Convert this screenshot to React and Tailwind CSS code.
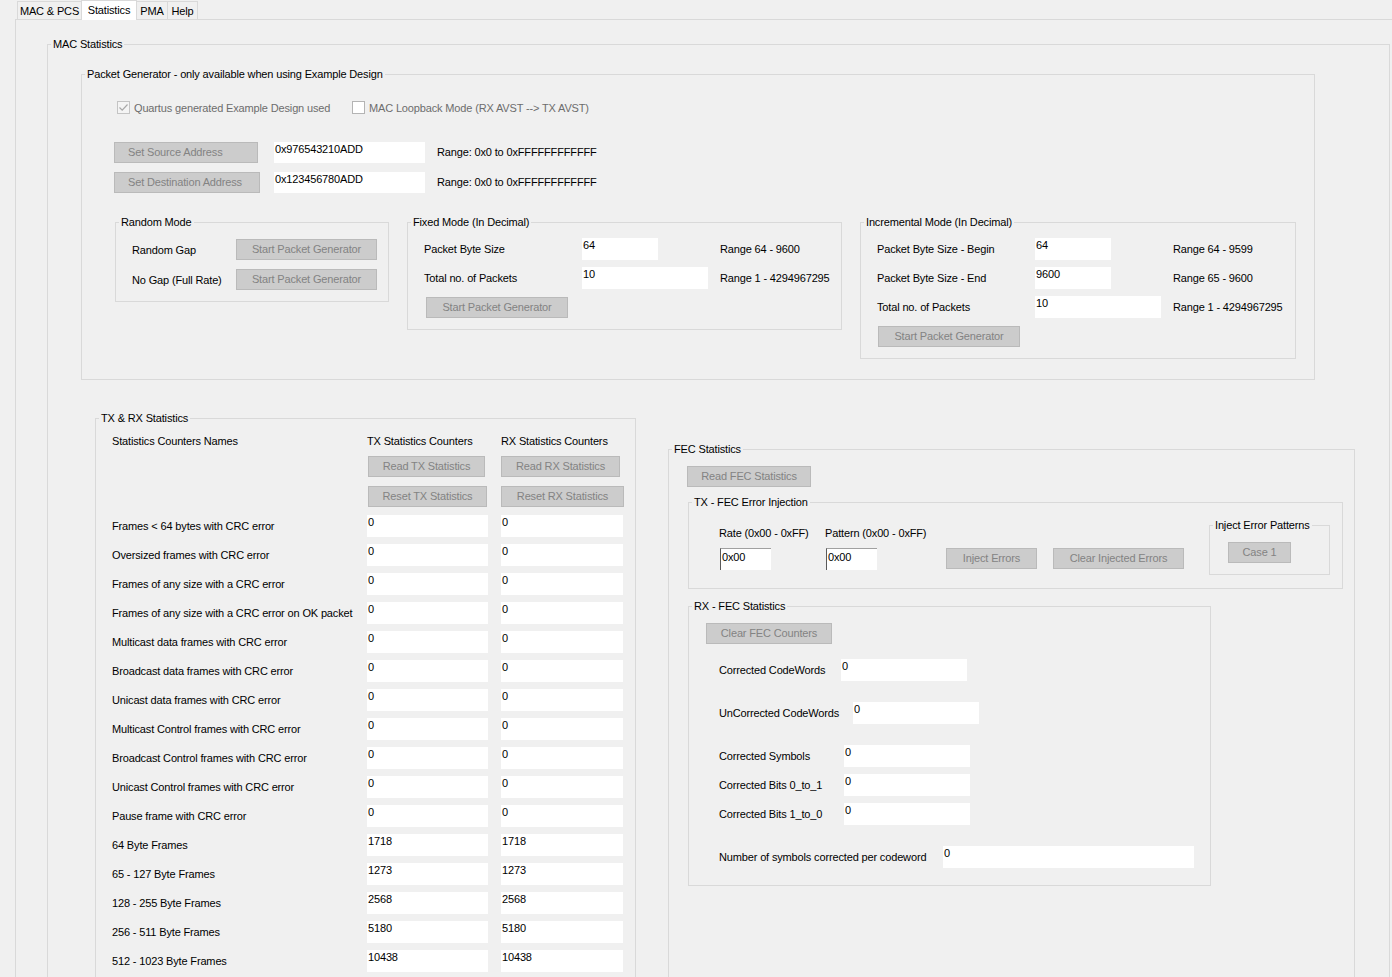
import React from 'react';

const Group = ({ title, className = '', children }) => (
    <fieldset className={`border border-[#d9d9d9] ${className}`}>
        <legend className="ml-[3px] px-[2px] leading-[14px] text-black">{title}</legend>
        {children}
    </fieldset>
);

const Btn = ({ w, align = 'justify-center', className = '', children }) => (
    <button type="button" className={`h-[21px] ${w} flex items-center ${align} pb-[2px] bg-[#cccccc] border border-[#bababa] text-[#838383] leading-[14px] ${className}`}>
        {children}
    </button>
);

const Field = ({ w, h = 'h-[22px]', className = '', children }) => (
    <div className={`${h} ${w} bg-white pl-[1px] leading-[14px] text-black ${className}`}>{children}</div>
);

const CheckBox = ({ checked }) => (
    <div className={`w-[13px] h-[13px] border flex items-center justify-center ${checked ? 'border-[#c4c4c4] bg-[#f4f4f4]' : 'border-[#b4b4b4] bg-white'}`}>
        {checked && (
            <svg width="11" height="11" viewBox="0 0 11 11">
                <polyline points="1.5,5.5 4.2,8.2 9.5,2.5" fill="none" stroke="#a8a8a8" strokeWidth="1.2" />
            </svg>
        )}
    </div>
);

const counters = [
    ['Frames < 64 bytes with CRC error', '0'],
    ['Oversized frames with CRC error', '0'],
    ['Frames of any size with a CRC error', '0'],
    ['Frames of any size with a CRC error on OK packet', '0'],
    ['Multicast data frames with CRC error', '0'],
    ['Broadcast data frames with CRC error', '0'],
    ['Unicast data frames with CRC error', '0'],
    ['Multicast Control frames with CRC error', '0'],
    ['Broadcast Control frames with CRC error', '0'],
    ['Unicast Control frames with CRC error', '0'],
    ['Pause frame with CRC error', '0'],
    ['64 Byte Frames', '1718'],
    ['65 - 127 Byte Frames', '1273'],
    ['128 - 255 Byte Frames', '2568'],
    ['256 - 511 Byte Frames', '5180'],
    ['512 - 1023 Byte Frames', '10438'],
];

export default function App() {
    return (
        <div className="w-[1392px] h-[977px] overflow-hidden bg-[#f0f0f0] text-black text-[11px] leading-[14px] tracking-[-0.15px] font-['Liberation_Sans',Arial,sans-serif]">
            {/* tabs */}
            <div className="flex items-end h-[19px] pl-[17px] relative z-10">
                <div className="w-[65px] h-[18px] border border-b-0 border-[#d9d9d9] flex items-center justify-center">MAC &amp; PCS</div>
                <div className="w-[56px] h-[20px] -ml-px -mb-px border border-b-0 border-[#d9d9d9] bg-white flex items-start pt-[2px] justify-center">Statistics</div>
                <div className="w-[32px] h-[18px] -ml-px border border-b-0 border-[#d9d9d9] flex items-center justify-center">PMA</div>
                <div className="w-[31px] h-[18px] -ml-px border border-b-0 border-[#d9d9d9] flex items-center justify-center">Help</div>
            </div>

            <div className="ml-[15px] border-l border-t border-[#d9d9d9] h-[980px] pl-[31px] pt-[17px]">
                <Group title="MAC Statistics" className="w-[1343px] pb-[100px]">
                    {/* Packet generator */}
                    <Group title="Packet Generator - only available when using Example Design" className="ml-[33px] mt-[16px] w-[1234px] pb-[20px]">
                        <div className="flex items-center h-[13px] mt-[20px] ml-[35px]">
                            <div className="w-[235px] flex items-center gap-[4px]">
                                <CheckBox checked />
                                <span className="text-[#6d6d6d]">Quartus generated Example Design used</span>
                            </div>
                            <div className="flex items-center gap-[4px]">
                                <CheckBox />
                                <span className="text-[#6d6d6d]">MAC Loopback Mode (RX AVST --&gt; TX AVST)</span>
                            </div>
                        </div>

                        <div className="mt-[28px] ml-[32px] grid grid-cols-[160px_163px_auto] gap-y-[9px] items-center">
                            <Btn w="w-[144px]" align="justify-start pl-[13px]">Set Source Address</Btn>
                            <Field w="w-[151px]" h="h-[21px]">0x976543210ADD</Field>
                            <span className="-mt-px">Range: 0x0 to 0xFFFFFFFFFFFF</span>
                            <Btn w="w-[146px]" align="justify-start pl-[13px]">Set Destination Address</Btn>
                            <Field w="w-[151px]" h="h-[21px]">0x123456780ADD</Field>
                            <span className="-mt-px">Range: 0x0 to 0xFFFFFFFFFFFF</span>
                        </div>

                        <div className="flex items-start gap-[18px] mt-[22px] ml-[33px]">
                            <Group title="Random Mode" className="w-[274px] pb-[11px]">
                                <div className="mt-[10px] pl-[16px] flex flex-col gap-[9px]">
                                    <div className="flex items-center">
                                        <span className="w-[104px]">Random Gap</span>
                                        <Btn w="w-[141px]">Start Packet Generator</Btn>
                                    </div>
                                    <div className="flex items-center">
                                        <span className="w-[104px]">No Gap (Full Rate)</span>
                                        <Btn w="w-[141px]">Start Packet Generator</Btn>
                                    </div>
                                </div>
                            </Group>

                            <Group title="Fixed Mode (In Decimal)" className="w-[435px] pb-[11px]">
                                <div className="mt-[9px] pl-[16px] grid grid-cols-[158px_138px_auto] gap-y-[7px] items-center">
                                    <span>Packet Byte Size</span>
                                    <Field w="w-[76px]">64</Field>
                                    <span>Range 64 - 9600</span>
                                    <span>Total no. of Packets</span>
                                    <Field w="w-[126px]">10</Field>
                                    <span>Range 1 - 4294967295</span>
                                </div>
                                <Btn w="w-[142px]" className="mt-[8px] ml-[18px]">Start Packet Generator</Btn>
                            </Group>

                            <Group title="Incremental Mode (In Decimal)" className="w-[436px] pb-[11px]">
                                <div className="mt-[9px] pl-[16px] grid grid-cols-[158px_138px_auto] gap-y-[7px] items-center">
                                    <span>Packet Byte Size - Begin</span>
                                    <Field w="w-[76px]">64</Field>
                                    <span>Range 64 - 9599</span>
                                    <span>Packet Byte Size - End</span>
                                    <Field w="w-[76px]">9600</Field>
                                    <span>Range 65 - 9600</span>
                                    <span>Total no. of Packets</span>
                                    <Field w="w-[126px]">10</Field>
                                    <span>Range 1 - 4294967295</span>
                                </div>
                                <Btn w="w-[142px]" className="mt-[8px] ml-[17px]">Start Packet Generator</Btn>
                            </Group>
                        </div>
                    </Group>

                    <div className="flex items-start ml-[47px] mt-[31px]">
                        {/* TX & RX */}
                        <Group title="TX & RX Statistics" className="w-[541px] pb-[100px]">
                            <div className="pl-[16px]">
                                <div className="mt-[9px] grid grid-cols-[255px_134px_auto] h-[14px]">
                                    <span>Statistics Counters Names</span>
                                    <span>TX Statistics Counters</span>
                                    <span>RX Statistics Counters</span>
                                </div>
                                <div className="mt-[8px] flex pl-[256px]">
                                    <Btn w="w-[117px]">Read TX Statistics</Btn>
                                    <Btn w="w-[119px]" className="ml-[16px]">Read RX Statistics</Btn>
                                </div>
                                <div className="mt-[9px] flex pl-[256px]">
                                    <Btn w="w-[119px]">Reset TX Statistics</Btn>
                                    <Btn w="w-[123px]" className="ml-[14px]">Reset RX Statistics</Btn>
                                </div>
                                <div className="mt-[8px] flex flex-col gap-[7px]">
                                    {counters.map(([name, v]) => (
                                        <div key={name} className="grid grid-cols-[255px_134px_auto] items-center">
                                            <span>{name}</span>
                                            <Field w="w-[121px]">{v}</Field>
                                            <Field w="w-[122px]">{v}</Field>
                                        </div>
                                    ))}
                                </div>
                            </div>
                        </Group>

                        {/* FEC */}
                        <Group title="FEC Statistics" className="w-[687px] ml-[32px] mt-[31px] pb-[200px]">
                            <Btn w="w-[124px]" className="ml-[18px] mt-[10px]">Read FEC Statistics</Btn>

                            <Group title="TX - FEC Error Injection" className="w-[655px] ml-[19px] mt-[8px] pb-[13px]">
                                <div className="flex items-start">
                                    <div className="pl-[30px]">
                                        <div className="mt-[17px] flex h-[14px]">
                                            <span className="w-[106px]">Rate (0x00 - 0xFF)</span>
                                            <span>Pattern (0x00 - 0xFF)</span>
                                        </div>
                                        <div className="mt-[8px] flex items-start">
                                            <Field w="w-[51px]" className="ml-[1px] border-l border-t border-l-[#5a5a5a] border-t-[#a0a0a0] pl-0 pt-[1px]">0x00</Field>
                                            <Field w="w-[51px]" className="ml-[55px] border-l border-t border-l-[#5a5a5a] border-t-[#a0a0a0] pl-0 pt-[1px]">0x00</Field>
                                            <Btn w="w-[91px]" className="ml-[69px]">Inject Errors</Btn>
                                            <Btn w="w-[131px]" className="ml-[16px]">Clear Injected Errors</Btn>
                                        </div>
                                    </div>
                                    <Group title="Inject Error Patterns" className="w-[121px] ml-auto mr-[12px] mt-[9px] pb-[11px]">
                                        <Btn w="w-[63px]" className="ml-[18px] mt-[10px]">Case 1</Btn>
                                    </Group>
                                </div>
                            </Group>

                            <Group title="RX - FEC Statistics" className="w-[523px] ml-[19px] mt-[10px] pb-[17px]">
                                <Btn w="w-[126px]" className="ml-[17px] mt-[10px]">Clear FEC Counters</Btn>
                                <div className="pl-[30px]">
                                    <div className="mt-[15px] flex items-center">
                                        <span className="w-[122px]">Corrected CodeWords</span>
                                        <Field w="w-[126px]">0</Field>
                                    </div>
                                    <div className="mt-[21px] flex items-center">
                                        <span className="w-[134px]">UnCorrected CodeWords</span>
                                        <Field w="w-[126px]">0</Field>
                                    </div>
                                    <div className="mt-[21px] flex items-center">
                                        <span className="w-[125px]">Corrected Symbols</span>
                                        <Field w="w-[126px]">0</Field>
                                    </div>
                                    <div className="mt-[7px] flex items-center">
                                        <span className="w-[125px]">Corrected Bits 0_to_1</span>
                                        <Field w="w-[126px]">0</Field>
                                    </div>
                                    <div className="mt-[7px] flex items-center">
                                        <span className="w-[125px]">Corrected Bits 1_to_0</span>
                                        <Field w="w-[126px]">0</Field>
                                    </div>
                                    <div className="mt-[21px] flex items-center">
                                        <span className="w-[224px]">Number of symbols corrected per codeword</span>
                                        <Field w="w-[251px]">0</Field>
                                    </div>
                                </div>
                            </Group>
                        </Group>
                    </div>
                </Group>
            </div>
        </div>
    );
}
